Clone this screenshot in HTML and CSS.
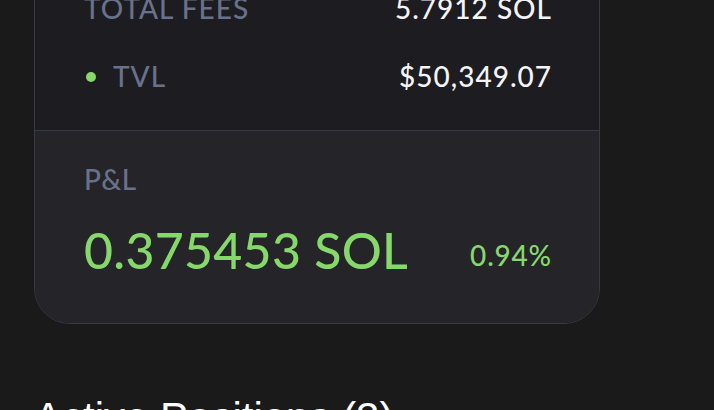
FILE: index.html
```html
<!DOCTYPE html>
<html lang="en">

<head>
    <meta charset="UTF-8" />
    <meta name="viewport" content="width=device-width, initial-scale=1.0" />
    <title>Pool Position</title>
    <link rel="stylesheet" href="styles.css">
</head>

<body>
    <div class="page">
        <div class="pool-card">
            <div class="stats">
                <div class="stat-row">
                    <span class="stat-label">TOTAL FEES</span>
                    <span class="stat-value">5.7912 SOL</span>
                </div>
                <div class="stat-row">
                    <span class="stat-label"><span class="dot"></span>TVL</span>
                    <span class="stat-value">$50,349.07</span>
                </div>
            </div>

            <div class="pnl">
                <p class="pnl-label">P&amp;L</p>
                <div class="pnl-row">
                    <span class="pnl-amount">0.375453 SOL</span>
                    <span class="pnl-percent">0.94%</span>
                </div>
            </div>
        </div>

        <h2 class="section-title">Active Positions (3)</h2>
    </div>
</body>

</html>
```

FILE: styles.css
```css
body {
    margin: 0;
    background: #1a1a1a;
    font-family: Lato, "Open Sans", sans-serif;
    font-weight: 500;
    color: #f4f4f5;
    overflow: hidden;
}

.page {
    margin-top: -50px;
    padding: 0 34px;
}

.pool-card {
    width: 564px;
    border: 1px solid #373945;
    border-radius: 0 0 36px 36px;
    overflow: hidden;
}

.stats {
    background: #1d1c21;
    padding: 24px 47px 19px 49px;
    border-bottom: 1px solid #373945;
}

.stat-row {
    display: flex;
    justify-content: space-between;
    align-items: center;
    height: 68px;
    font-size: 28px;
    line-height: 1.2;
    letter-spacing: 1px;
}

.stat-label {
    display: flex;
    align-items: center;
    color: #68728a;
}

.stat-value {
    color: #f4f4f5;
}

.dot {
    width: 10px;
    height: 10px;
    border-radius: 50%;
    background: #86d86b;
    margin: 0 17px 0 2px;
}

.pnl {
    background: #252429;
    padding: 32px 47px 43px 49px;
}

.pnl-label {
    margin: 0;
    font-size: 28px;
    line-height: 1.2;
    letter-spacing: 0.5px;
    color: #68728a;
}

.pnl-row {
    display: flex;
    justify-content: space-between;
    align-items: flex-end;
    margin-top: 23px;
    color: #86d86b;
}

.pnl-amount {
    font-size: 50px;
    line-height: 1.2;
    letter-spacing: 0.3px;
}

.pnl-percent {
    font-size: 28px;
    line-height: 1.2;
    letter-spacing: 0.8px;
    margin-bottom: 7px;
}

.section-title {
    margin: 69px 0 0;
    font-family: "Liberation Sans", Arial, sans-serif;
    font-size: 42px;
    font-weight: normal;
    line-height: 1.2;
    color: #ffffff;
}
```
